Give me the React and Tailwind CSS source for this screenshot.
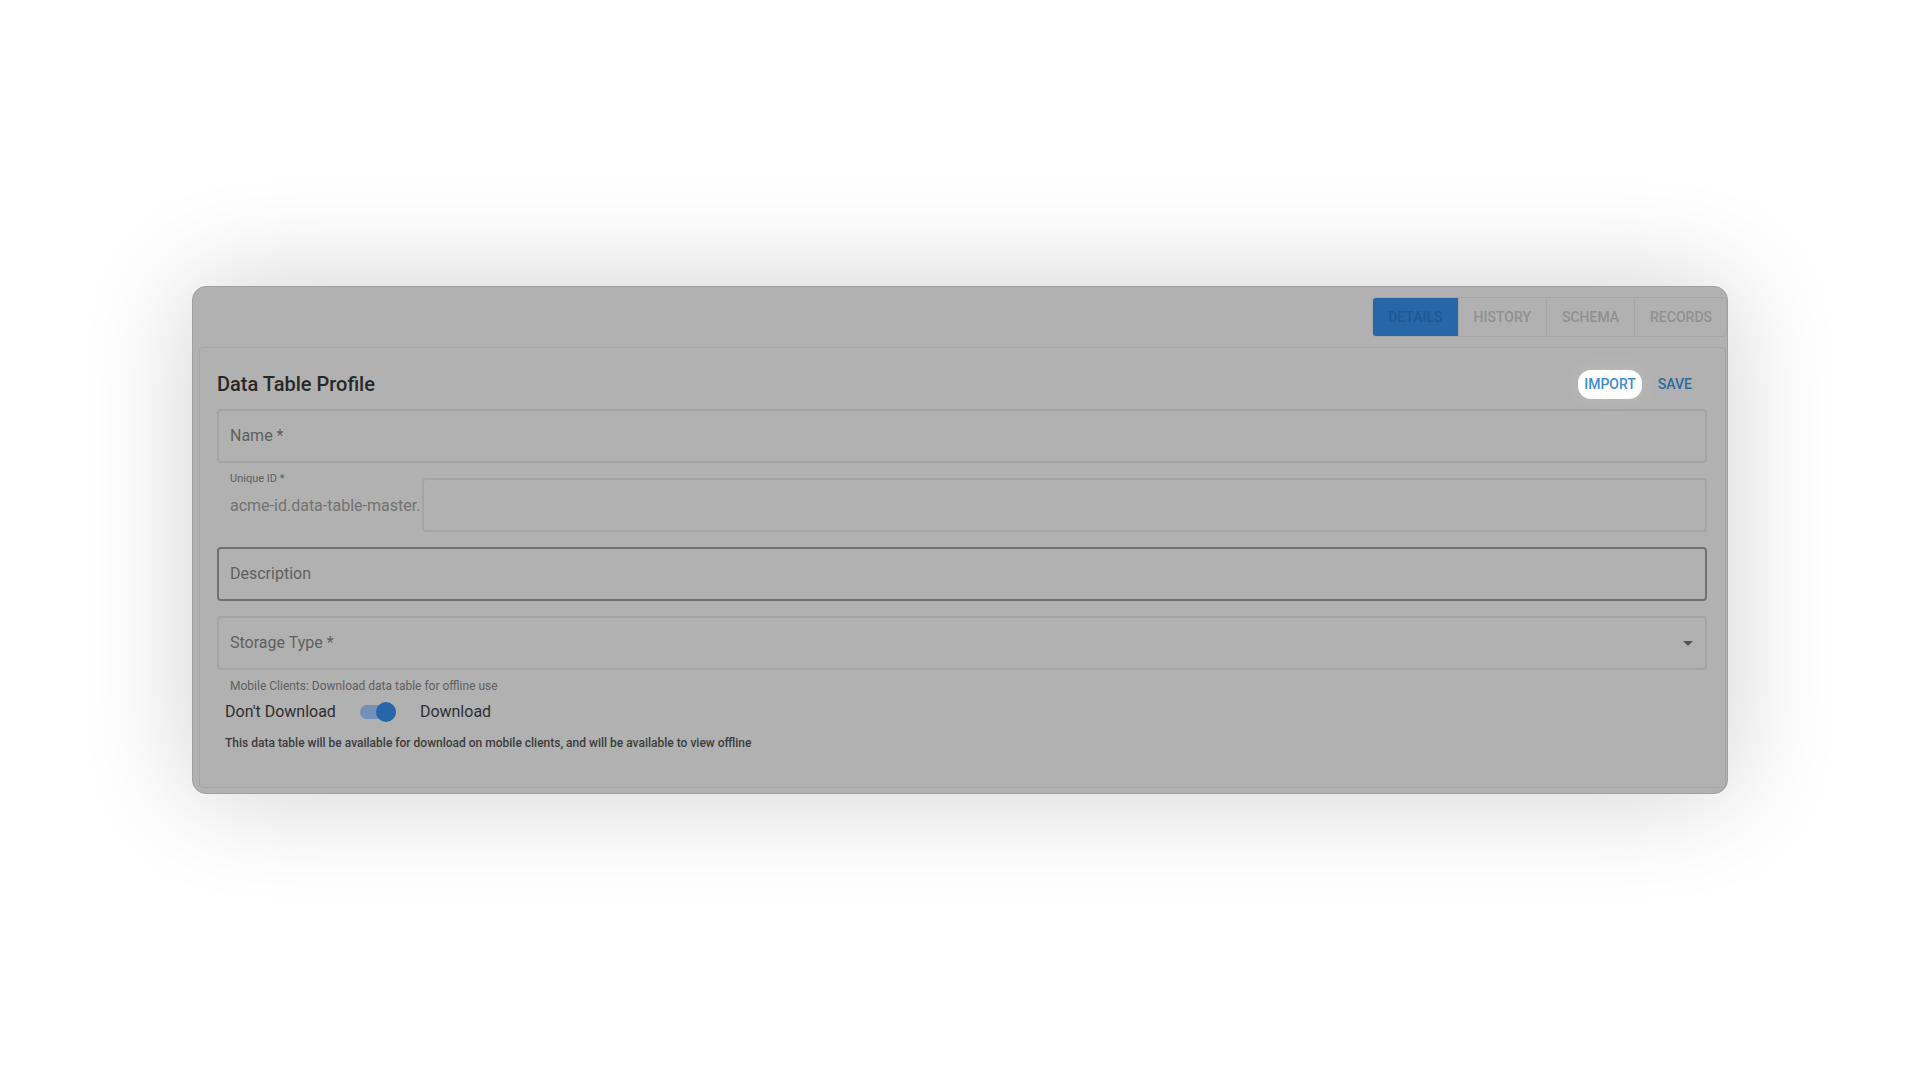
import React, { useState } from 'react';

const tabs = ['DETAILS', 'HISTORY', 'SCHEMA', 'RECORDS'];

const App = () => {
  const [activeTab, setActiveTab] = useState('DETAILS');
  const [download, setDownload] = useState(true);

  return (
    <div className="flex min-h-screen items-center justify-center bg-white font-[Roboto,sans-serif]">
      <main className="w-4/5 rounded-[14px] border border-[#a0a0a0] bg-[#b1b1b1] pb-[5px] shadow-[0_0_110px_rgba(0,0,0,0.19)]">
        <nav className="flex h-[60px] items-center justify-end">
          <div className="flex rounded-[4px] border border-[#a6a6a6]">
            {tabs.map((tab) => (
              <button
                key={tab}
                type="button"
                onClick={() => setActiveTab(tab)}
                className={`h-[38px] border-r border-[#a4a4a4] px-[15px] text-sm font-medium first:rounded-l-[3px] last:border-r-0 last:pr-[14px] ${activeTab === tab ? 'bg-[#2766a8] text-[#22578f]' : 'text-[#909090]'}`}
              >
                {tab}
              </button>
            ))}
          </div>
        </nav>

        <section className="mr-px ml-[6px] rounded-[4px] border border-[#a5a5a5] pt-[21px] pr-[18px] pb-9 pl-[17px]">
          <header className="flex h-[30px] items-center justify-between">
            <h1 className="text-xl font-medium text-[#282828]">Data Table Profile</h1>
            <div className="flex items-center gap-2 pr-[7px] text-sm font-medium">
              <button
                type="button"
                className="h-[29px] rounded-[13px] bg-white px-[6px] text-[#3d8ccc] shadow-[0_0_24px_rgba(255,255,255,0.15)]"
              >
                IMPORT
              </button>
              <button type="button" className="h-[29px] px-2 text-[#2b699f]">SAVE</button>
            </div>
          </header>

          <form className="mt-[10px] flex flex-col text-base text-[#5f5f5f]">
            <label className="flex h-[54px] items-center rounded-[4px] border-2 border-[#a4a4a4] px-[11px]">
              <span>Name *</span>
              <input type="text" className="ml-2 min-w-0 flex-1 outline-none" />
            </label>

            <div className="mt-[15px] flex h-[54px]">
              <label htmlFor="unique-id" className="w-[205px] pl-[13px] whitespace-nowrap">
                <span className="block text-[11px] leading-[2px]">Unique ID *</span>
                <span className="mt-[14px] block leading-6 text-[#737373]">acme-id.data-table-master.</span>
              </label>
              <input
                id="unique-id"
                type="text"
                className="min-w-0 flex-1 rounded-[4px] border-2 border-[#a4a4a4] px-3 outline-none"
              />
            </div>

            <label className="mt-[15px] flex h-[54px] items-center rounded-[4px] border-2 border-[#707070] px-[11px]">
              <span>Description</span>
              <input type="text" className="ml-2 min-w-0 flex-1 outline-none" />
            </label>

            <label className="mt-[15px] flex h-[54px] items-center rounded-[4px] border-2 border-[#a4a4a4] px-3 pl-[11px]">
              <span>Storage Type *</span>
              <select className="ml-2 min-w-0 flex-1 appearance-none outline-none" defaultValue="">
                <option value=""></option>
              </select>
              <svg width="10" height="5" viewBox="0 0 10 5" fill="#555">
                <path d="M0 0h10L5 5z" />
              </svg>
            </label>

            <p className="mt-2 pl-[13px] text-xs leading-4">Mobile Clients: Download data table for offline use</p>

            <label className="mt-[6px] flex h-6 items-center self-start pl-2 text-[#2f2f2f]">
              <span>Don&apos;t Download</span>
              <input
                type="checkbox"
                role="switch"
                checked={download}
                onChange={(e) => setDownload(e.target.checked)}
                className="peer sr-only"
              />
              <span className="ml-6 flex h-[14px] w-9 items-center rounded-full bg-[#7590b8] peer-checked:justify-end">
                <span className="h-5 w-5 shrink-0 rounded-full bg-[#2766a8]"></span>
              </span>
              <span className="ml-6">Download</span>
            </label>

            <p className="mt-[11px] pl-2 text-xs leading-4 font-medium text-[#3c3c3c]">
              This data table will be available for download on mobile clients, and will be available to view offline
            </p>
          </form>
        </section>
      </main>
    </div>
  );
};

export default App;
